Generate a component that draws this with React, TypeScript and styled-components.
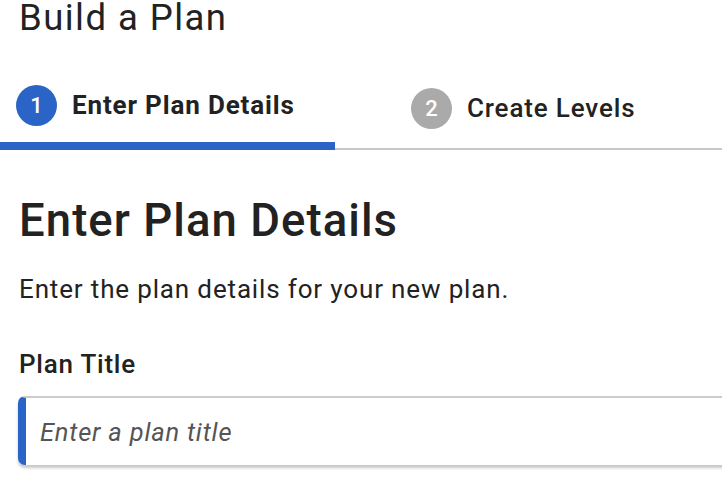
import React from "react";
import styled, { createGlobalStyle } from "styled-components";

const Global = createGlobalStyle`
  html, body { margin: 0; padding: 0; background: #fff; overflow: hidden; }
  body { font-family: Roboto, "Liberation Sans", sans-serif; color: #222; }
  * { box-sizing: border-box; }
`;

const Page = styled.div`
  width: 722px;
  height: 488px;
  overflow: hidden;
`;

const Title = styled.h1`
  margin: 0;
  padding-left: 19px;
  font-size: 36.5px;
  line-height: 36px;
  letter-spacing: 1.45px;
  font-weight: 400;
  color: #222;
`;

const TabBar = styled.div`
  display: flex;
  margin-top: 32px;
`;

const Tab = styled.div<{ $active?: boolean; $grow?: boolean }>`
  display: flex;
  align-items: center;
  gap: 15px;
  height: 82px;
  width: ${(p) => (p.$grow ? "auto" : "335px")};
  flex: ${(p) => (p.$grow ? 1 : "none")};
  padding-left: ${(p) => (p.$active ? 16 : 76)}px;
  border-bottom: ${(p) => (p.$active ? "8px solid #2a64c6" : "2px solid #c8c8c8")};
`;

const StepCircle = styled.span<{ $active?: boolean }>`
  width: 41px;
  height: 41px;
  border-radius: 50%;
  background: ${(p) => (p.$active ? "#2a64c6" : "#aaaaaa")};
  color: #fff;
  display: flex;
  align-items: center;
  justify-content: center;
  font-size: 22px;
  font-weight: 500;
  flex: none;
`;

const TabLabel = styled.span<{ $active?: boolean }>`
  font-size: 26px;
  letter-spacing: 0.85px;
  font-weight: ${(p) => (p.$active ? 700 : 500)};
  color: #222;
  white-space: nowrap;
`;

const Content = styled.div`
  padding-left: 19px;
`;

const Heading = styled.h2`
  margin: 46px 0 0;
  font-size: 45.5px;
  line-height: 50px;
  letter-spacing: 1.05px;
  font-weight: 500;
  color: #222;
`;

const Lead = styled.p`
  margin: 28px 0 0;
  font-size: 26px;
  line-height: 30px;
  letter-spacing: 0.85px;
  color: #222;
`;

const Label = styled.label`
  display: block;
  margin-top: 45px;
  font-size: 26px;
  line-height: 30px;
  letter-spacing: 0.77px;
  font-weight: 500;
  color: #222;
`;

const Input = styled.input`
  display: block;
  margin-top: 17px;
  margin-left: -1px;
  width: 760px;
  height: 69px;
  border: none;
  border-top: 2px solid #cccccc;
  border-left: 8px solid #2a64c6;
  border-radius: 7px 0 0 7px;
  box-shadow: 0 3px 3px rgba(0, 0, 0, 0.22);
  padding: 0 14px;
  font-family: Roboto, "Liberation Sans", sans-serif;
  font-size: 25.5px;
  letter-spacing: 0.8px;
  background: #fff;
  outline: none;
  &::placeholder {
    font-style: italic;
    color: #555;
  }
`;

export default function App() {
  return (
    <Page>
      <Global />
      <Title>Build a Plan</Title>
      <TabBar>
        <Tab $active>
          <StepCircle $active>1</StepCircle>
          <TabLabel $active>Enter Plan Details</TabLabel>
        </Tab>
        <Tab $grow>
          <StepCircle>2</StepCircle>
          <TabLabel>Create Levels</TabLabel>
        </Tab>
      </TabBar>
      <Content>
        <Heading>Enter Plan Details</Heading>
        <Lead>Enter the plan details for your new plan.</Lead>
        <Label htmlFor="plan-title">Plan Title</Label>
        <Input id="plan-title" placeholder="Enter a plan title" />
      </Content>
    </Page>
  );
}
